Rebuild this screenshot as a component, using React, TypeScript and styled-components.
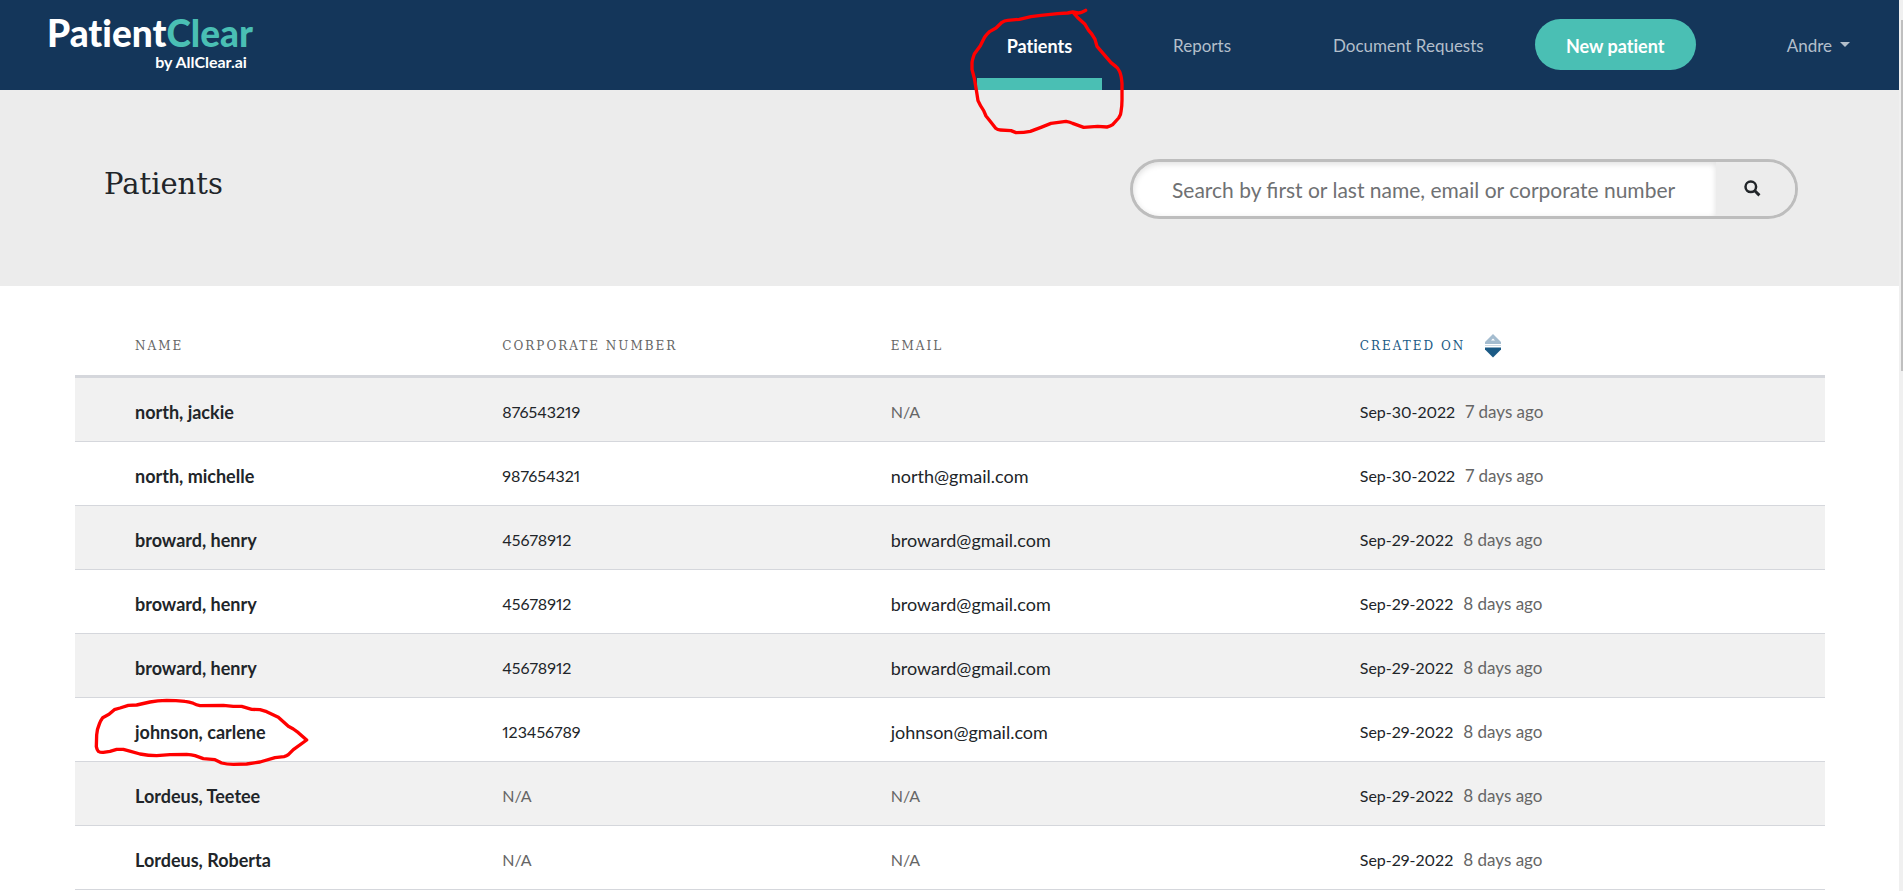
import React from "react";
import styled, { createGlobalStyle, css } from "styled-components";

const colors = {
  navy: "#14365a",
  teal: "#4abfb4",
  band: "#ececec",
  stripe: "#f1f1f1",
  line: "#d5d7dc",
  ink: "#212529",
  muted: "#666666",
  sort: "#1b5a85",
};

const slab = `"DejaVu Serif", serif`;

const GlobalStyle = createGlobalStyle`
  *, *::before, *::after { box-sizing: border-box; }
  body {
    margin: 0;
    background: #fff;
    color: ${colors.ink};
    font-family: Lato, sans-serif;
    font-size: 17px;
    line-height: 24px;
    font-variant-ligatures: none;
  }
  button, input { font: inherit; color: inherit; }
`;

const Shell = styled.div`
  display: flex;
  min-height: 100vh;
`;

const Page = styled.div`
  flex: 1;
  min-width: 0;
`;

const ScrollTrack = styled.div`
  flex: none;
  width: 4px;
  padding: 20px 0 0 2px;
  background: #f0f0f0;
`;

const ScrollThumb = styled.div`
  height: 351px;
  background: #bfbfbf;
`;

const TopBar = styled.header`
  display: flex;
  justify-content: space-between;
  height: 90px;
  padding: 0 49px 0 47px;
  background: ${colors.navy};
`;

const Brand = styled.a`
  display: flex;
  flex-direction: column;
  gap: 2px;
  padding-top: 15px;
  color: #fff;
  text-decoration: none;
`;

const BrandName = styled.span`
  font-family: "Lato Black", Lato, sans-serif;
  font-size: 37px;
  font-weight: 900;
  line-height: 36px;
`;

const BrandAccent = styled.span`
  color: ${colors.teal};
`;

const BrandBy = styled.span`
  padding-right: 6px;
  font-size: 16px;
  font-weight: 700;
  line-height: 18px;
  text-align: right;
`;

const Nav = styled.nav`
  display: flex;
`;

const NavItem = styled.div`
  position: relative;
  display: flex;
  margin-right: 40px;

  &:nth-child(3) { margin-right: 20px; }
`;

const NavLink = styled.a<{ $active?: boolean }>`
  padding: 34px 31px 0;
  color: #b3bfcb;
  text-decoration: none;
  ${({ $active }) =>
    $active &&
    css`
      padding: 34px 30px 0;
      border-bottom: 12px solid ${colors.teal};
      color: #fff;
      font-size: 18px;
      font-weight: 700;
    `}
`;

const NewPatient = styled.button`
  width: 161px;
  height: 51px;
  margin: 19px 91px 0 0;
  padding: 3px 0 0;
  border: 0;
  border-radius: 26px;
  background: ${colors.teal};
  color: #fff;
  font-size: 18px;
  font-weight: 700;
`;

const UserMenu = styled.button`
  display: flex;
  align-items: center;
  gap: 8px;
  height: 24px;
  margin-top: 34px;
  padding: 0;
  border: 0;
  background: none;
  color: #b3bfcb;
`;

const Caret = styled.span`
  margin-bottom: 4px;
  border: 5px solid transparent;
  border-top-color: currentColor;
  border-bottom: 0;
`;

const TitleBand = styled.section`
  display: flex;
  justify-content: space-between;
  padding: 69px 101px 67px 104px;
  background: ${colors.band};
`;

const Title = styled.h1`
  margin: 0;
  padding-top: 7px;
  font-family: ${slab};
  font-size: 29px;
  font-weight: 400;
  line-height: 36px;
`;

const SearchBox = styled.form`
  display: flex;
  width: 668px;
  height: 60px;
  border: 3px solid #bdbdbd;
  border-radius: 30px;
  overflow: hidden;
`;

const SearchInput = styled.input`
  flex: 1;
  min-width: 0;
  padding: 2px 0 0 39px;
  border: 0;
  border-radius: 27px 0 0 27px;
  outline: 0;
  background: #fff;
  box-shadow: inset 0 2px 6px #00000022;
  font-size: 21px;
  font-variant-ligatures: normal;

  &::placeholder { color: #6f7173; opacity: 1; }
`;

const SearchButton = styled.button`
  display: flex;
  align-items: center;
  width: 79px;
  padding: 0 0 2px 28px;
  border: 0;
  background: ${colors.band};
`;

const TableArea = styled.main`
  padding: 29px 74px 0 75px;
`;

const Table = styled.table`
  width: 100%;
  table-layout: fixed;
  border-collapse: separate;
  border-spacing: 0;
`;

const Col = styled.col<{ $share: number }>`
  width: ${({ $share }) => $share}%;
`;

const HeadCell = styled.th<{ $sorted?: boolean }>`
  height: 63px;
  padding: 2px 16px 0;
  border-bottom: 3px solid ${colors.line};
  color: ${({ $sorted }) => ($sorted ? colors.sort : colors.muted)};
  font-family: ${slab};
  font-size: 12px;
  font-weight: 400;
  letter-spacing: 2px;
  text-align: left;
  text-transform: uppercase;

  &:first-child { padding-left: 60px; }
`;

const SortButton = styled.button`
  display: flex;
  align-items: center;
  gap: 20px;
  padding: 0;
  border: 0;
  background: none;
  letter-spacing: inherit;
  text-transform: inherit;
`;

const Row = styled.tr`
  &:nth-child(odd) { background: ${colors.stripe}; }
`;

const Cell = styled.td<{ $empty?: boolean; $text?: boolean }>`
  height: 64px;
  padding: 4px 16px 0;
  border-bottom: 1px solid ${colors.line};
  color: ${({ $empty }) => ($empty ? colors.muted : colors.ink)};
  font-size: ${({ $text, $empty }) => ($text && !$empty ? 18 : 16)}px;
  font-variant-numeric: proportional-nums;
`;

const NameCell = styled.th`
  position: relative;
  height: 64px;
  padding: 4px 0 0 60px;
  border-bottom: 1px solid ${colors.line};
  font-size: 18px;
  font-weight: 700;
  text-align: left;
`;

const Age = styled.span`
  margin-left: 10px;
  color: ${colors.muted};
  font-size: 17px;
`;

const Mark = styled.svg<{ $left: number; $top: number }>`
  position: absolute;
  z-index: 1;
  left: ${({ $left }) => $left}px;
  top: ${({ $top }) => $top}px;
  fill: none;
  stroke: #f00;
  stroke-width: 10;
  stroke-linecap: round;
  stroke-linejoin: round;
  pointer-events: none;
`;

const NavMark = () => (
  <Mark $left={-36} $top={0} width="200" height="150" viewBox="0 0 600 450" aria-hidden="true">
    <path d="M434 31Q420 39 412 39L395 36L380 39L350 41L300 46L270 50L235 58L200 61Q190 62 183 67L165 84L147 94Q132 108 128 117L118 137L100 162Q93 182 93 190V208L100 235L106 270L111 302Q117 316 128 332L135 348L150 367L164 385Q170 390 178 390L210 392L225 398Q250 398 268 394L300 382L330 370L375 364Q388 366 395 370L428 382L470 379L498 381Q508 379 515 374L533 354Q540 344 540 335Q543 318 543 300V250Q541 226 536 215Q531 204 525 200L510 188L468 139L462 118Q454 102 442 90L432 73L412 55L395 36" />
  </Mark>
);

const NameMark = () => (
  <Mark $left={-15} $top={-18} width="260" height="100" viewBox="0 0 780 300" aria-hidden="true">
    <path d="M205 76L180 84L163 89L147 103L128 113Q120 124 118 132Q111 148 110 165L109 200Q111 210 115 214Q122 218 130 217L150 214L170 208H190L212 214L240 222Q265 227 290 227L330 224L380 223Q395 224 405 227L430 236L465 239L485 249Q500 253 520 253L560 252L600 246L645 233L672 230Q680 228 685 224L700 209L740 180L715 158L700 147L685 139L655 112L620 95L600 89L575 88L545 79H520L490 76L420 77Q409 75 400 70Q388 65 375 64Q348 61 320 61Q292 62 270 66L230 75Z" />
  </Mark>
);

const SearchIcon = () => (
  <svg width="17" height="17" viewBox="0 0 17 17" fill="none" stroke="#212529" aria-hidden="true">
    <circle cx="6.8" cy="6.8" r="5.3" strokeWidth="2.5" />
    <path d="M10.8 10.8L15.4 15.4" strokeWidth="3" />
  </svg>
);

const SortIcon = () => (
  <svg width="16" height="24" viewBox="0 0 16 24" aria-hidden="true">
    <path d="M8 0L16 8V10H0V8Z" fill="#a4bccf" />
    <path d="M8 4.5L10 6.5H6Z" fill="#fff" />
    <path d="M0 11.5H16" stroke="#cdd9e3" />
    <path d="M0 13.5H16V15.5L8 23.5L0 15.5Z" fill={colors.sort} />
  </svg>
);

interface Patient {
  name: string;
  corporate?: string;
  email?: string;
  created: string;
  age: string;
  marked?: boolean;
}

const patients: Patient[] = [
  { name: "north, jackie", corporate: "876543219", created: "Sep-30-2022", age: "7 days ago" },
  { name: "north, michelle", corporate: "987654321", email: "north@gmail.com", created: "Sep-30-2022", age: "7 days ago" },
  { name: "broward, henry", corporate: "45678912", email: "broward@gmail.com", created: "Sep-29-2022", age: "8 days ago" },
  { name: "broward, henry", corporate: "45678912", email: "broward@gmail.com", created: "Sep-29-2022", age: "8 days ago" },
  { name: "broward, henry", corporate: "45678912", email: "broward@gmail.com", created: "Sep-29-2022", age: "8 days ago" },
  { name: "johnson, carlene", corporate: "123456789", email: "johnson@gmail.com", created: "Sep-29-2022", age: "8 days ago", marked: true },
  { name: "Lordeus, Teetee", created: "Sep-29-2022", age: "8 days ago" },
  { name: "Lordeus, Roberta", created: "Sep-29-2022", age: "8 days ago" },
];

export default function App() {
  return (
    <>
      <GlobalStyle />
      <Shell>
        <Page>
          <TopBar>
            <Brand href="#">
              <BrandName>
                Patient<BrandAccent>Clear</BrandAccent>
              </BrandName>
              <BrandBy>by AllClear.ai</BrandBy>
            </Brand>
            <Nav>
              <NavItem>
                <NavLink href="#patients" $active aria-current="page">Patients</NavLink>
                <NavMark />
              </NavItem>
              <NavItem>
                <NavLink href="#reports">Reports</NavLink>
              </NavItem>
              <NavItem>
                <NavLink href="#requests">Document Requests</NavLink>
              </NavItem>
              <NewPatient type="button">New patient</NewPatient>
              <UserMenu type="button" aria-haspopup="menu">
                Andre
                <Caret />
              </UserMenu>
            </Nav>
          </TopBar>
          <TitleBand>
            <Title>Patients</Title>
            <SearchBox role="search">
              <SearchInput
                type="text"
                aria-label="Search patients"
                placeholder="Search by first or last name, email or corporate number"
              />
              <SearchButton type="button" aria-label="Search">
                <SearchIcon />
              </SearchButton>
            </SearchBox>
          </TitleBand>
          <TableArea>
            <Table>
              <colgroup>
                <Col $share={23.5} />
                <Col $share={22.2} />
                <Col $share={26.8} />
                <Col $share={27.5} />
              </colgroup>
              <thead>
                <tr>
                  <HeadCell scope="col">Name</HeadCell>
                  <HeadCell scope="col">Corporate number</HeadCell>
                  <HeadCell scope="col">Email</HeadCell>
                  <HeadCell scope="col" $sorted aria-sort="descending">
                    <SortButton type="button">
                      Created on
                      <SortIcon />
                    </SortButton>
                  </HeadCell>
                </tr>
              </thead>
              <tbody>
                {patients.map((p, i) => (
                  <Row key={i}>
                    <NameCell scope="row">
                      {p.name}
                      {p.marked && <NameMark />}
                    </NameCell>
                    <Cell $empty={!p.corporate}>{p.corporate ?? "N/A"}</Cell>
                    <Cell $text $empty={!p.email}>{p.email ?? "N/A"}</Cell>
                    <Cell>
                      {p.created}
                      <Age>{p.age}</Age>
                    </Cell>
                  </Row>
                ))}
              </tbody>
            </Table>
          </TableArea>
        </Page>
        <ScrollTrack>
          <ScrollThumb />
        </ScrollTrack>
      </Shell>
    </>
  );
}
